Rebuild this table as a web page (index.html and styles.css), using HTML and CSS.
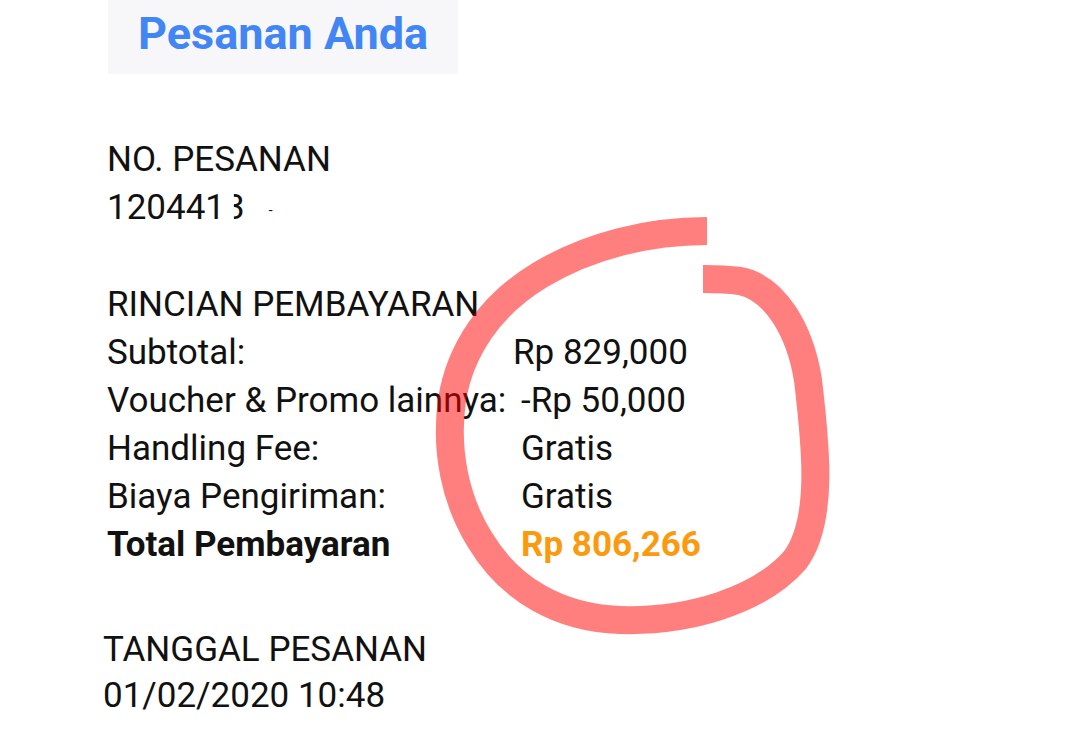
FILE: index.html
```html
<!DOCTYPE html>
<html lang="id">
<head>
<meta charset="utf-8">
<title>Pesanan Anda</title>
<link rel="stylesheet" href="styles.css">
</head>
<body>
<div class="page">
  <header class="title-box">
    <h1 class="title">Pesanan Anda</h1>
  </header>

  <section class="block block-order">
    <div class="line">NO. PESANAN</div>
    <div class="line">120441<span class="masked">3</span><span class="speck">-</span></div>
  </section>

  <section class="block block-pay">
    <div class="line">RINCIAN PEMBAYARAN</div>
    <div class="rows">
      <div class="label">Subtotal:</div>
      <div class="value value-sub">Rp 829,000</div>
      <div class="label">Voucher &amp; Promo lainnya:</div>
      <div class="value value-disc">-Rp 50,000</div>
      <div class="label">Handling Fee:</div>
      <div class="value">Gratis</div>
      <div class="label">Biaya Pengiriman:</div>
      <div class="value">Gratis</div>
      <div class="label label-total">Total Pembayaran</div>
      <div class="value value-total">Rp 806,266</div>
    </div>
  </section>

  <section class="block block-date">
    <div class="line">TANGGAL PESANAN</div>
    <div class="line">01/02/2020 10:48</div>
  </section>

  <svg class="scribble" width="1080" height="730" viewBox="0 0 1080 730" aria-hidden="true">
    <path d="M707,231 C650,231 590,245 540,275 C490,305 460,350 452,400 C445,450 455,500 480,540 C510,590 560,618 620,620 C690,622 760,600 795,560 C825,520 815,440 808,380 C800,330 775,288 740,281 C725,279 715,279 703,279" fill="none" stroke="#ff0000" stroke-opacity="0.5" stroke-width="28" stroke-linejoin="round" stroke-linecap="butt"/>
  </svg>
</div>
</body>
</html>
```

FILE: styles.css
```css
html, body {
  margin: 0;
  padding: 0;
  background: #ffffff;
}

body {
  font-family: Roboto, "Noto Sans", sans-serif;
  color: #111111;
  width: 1080px;
  height: 730px;
  overflow: hidden;
}

.page {
  position: relative;
  width: 1080px;
  height: 730px;
}

.title-box {
  margin-left: 108px;
  width: 350px;
  height: 74px;
  background: #f7f7f9;
  box-sizing: border-box;
  padding-left: 30px;
}

.title {
  margin: 0;
  font-size: 45px;
  font-weight: 700;
  line-height: 68px;
  color: #4286f5;
}

.block {
  font-size: 35px;
  line-height: 48px;
}

.line {
  white-space: nowrap;
}

.block-order {
  margin-top: 62px;
  padding-left: 107px;
}

.masked {
  display: inline-block;
  clip-path: inset(0 0 0 45%);
}

.speck {
  font-size: 14px;
  margin-left: 24px;
  vertical-align: 4px;
}

.block-pay {
  margin-top: 47px;
  padding-left: 107px;
}

.rows {
  display: grid;
  grid-template-columns: 414px auto;
  justify-content: start;
}

.label,
.value {
  white-space: nowrap;
}

.value-sub {
  margin-left: -8px;
}

.label-total {
  font-weight: 700;
}

.value-total {
  font-weight: 700;
  color: #fb9a0f;
}

.block-date {
  margin-top: 58px;
  padding-left: 103px;
  line-height: 46px;
}

.scribble {
  position: absolute;
  left: 0;
  top: 0;
  pointer-events: none;
}
```
